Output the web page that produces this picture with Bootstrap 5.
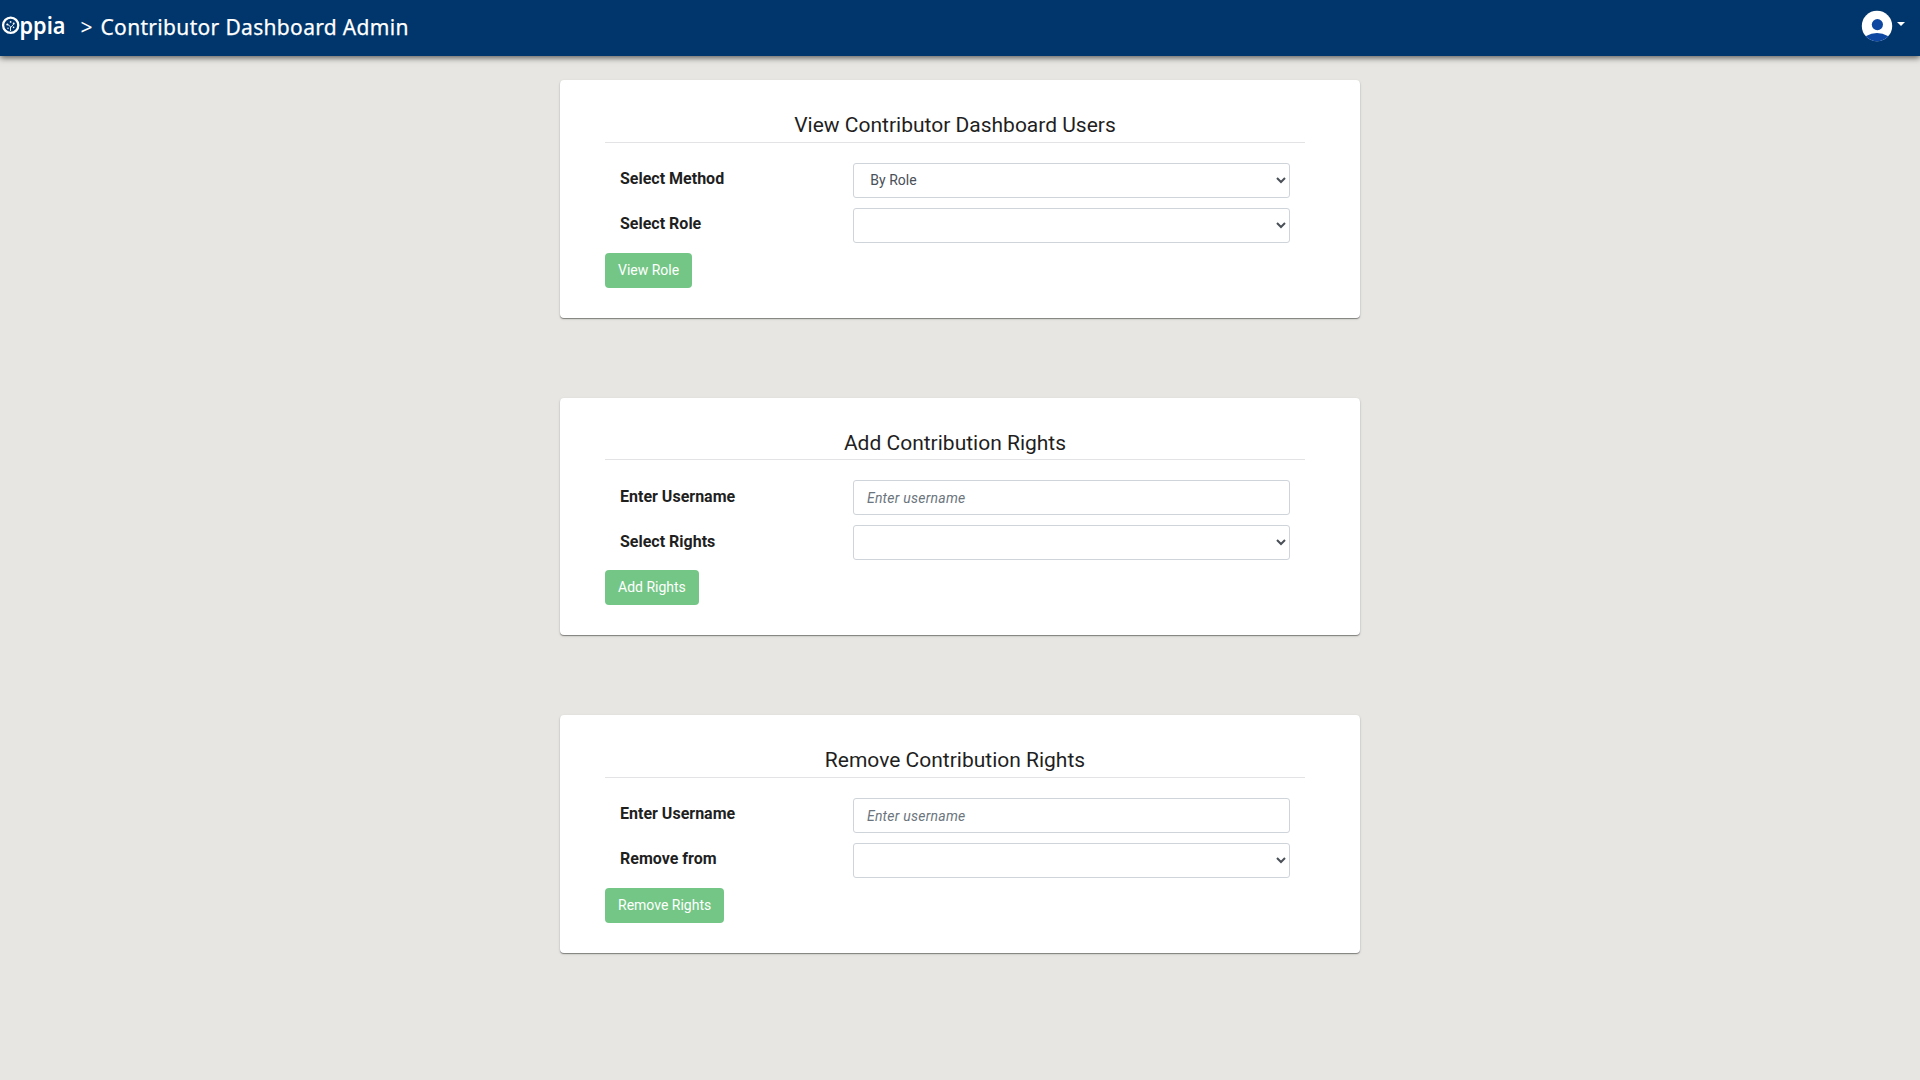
<!DOCTYPE html>
<html lang="en">
<head>
<meta charset="utf-8">
<title>Contributor Dashboard Admin</title>
<link rel="stylesheet" href="https://cdn.jsdelivr.net/npm/bootstrap@5.3.0/dist/css/bootstrap.min.css">
<style>
  body { background: #e7e6e2; color: #1f1f1f; font-family: Roboto, "Noto Sans", sans-serif; min-height: 100vh; }
  .top-bar { height: 56px; background: #00366b; box-shadow: 0 2px 6px rgba(0,0,0,.6); }
  .top-title { font: 400 21px/30px "Noto Sans", sans-serif; color: #fff; }
  .brand-mark { overflow: visible; }
  .crumb-sep { margin-left: 12.5px; width: 20px; }
  .crumb-name { letter-spacing: .33px; -webkit-text-stroke: .25px #fff; }
  .user-toggle { margin-right: 15px; }
  .panels { width: 800px; gap: 79.9px; padding-top: 24px; }
  .panel { height: 237.8px; padding: 30px 55px 0 45px; border: 0; border-radius: 4px; box-shadow: 0 1px 3px rgba(0,0,0,.12), 0 1px 1px rgba(0,0,0,.4); color: #1f1f1f; }
  .panel-heading { font-size: 21px; font-weight: 400; line-height: 31.5px; height: 32.7px; border-bottom: 1px solid #e3e3e5; margin-bottom: 20px; }
  .panel .row { --bs-gutter-x: 30px; margin: 0 0 10px; height: 35px; }
  .panel label { font-weight: 700; font-size: 16px; line-height: 24px; padding-top: 4.2px; }
  .panel .form-control { height: 35px; font-size: 14px; line-height: 21px; padding: 6px 12px; color: #495057; border: 1px solid #ced4da; border-radius: 3px; }
  .panel select.form-control { appearance: auto; }
  .panel .form-control::placeholder { color: #6c757d; font-style: italic; letter-spacing: .24px; }
  .panel input.form-control { padding-left: 12.6px; }
  .btn-go { height: 35px; padding: 6px 13px; font-size: 14px; line-height: 21px; border: 0; border-radius: 4px; }
  .btn-go:disabled { background: #74c686; color: #fff; opacity: 1; }
</style>
</head>
<body>
<nav class="top-bar d-flex justify-content-between position-relative">
  <div class="d-flex">
    <svg class="brand-mark" width="68" height="56" role="img" aria-label="Oppia">
      <circle cx="10.7" cy="25.3" r="7.6" fill="none" stroke="#fff" stroke-width="2.3"/>
      <path d="M10.5 31v-4.3L7.9 24.6M10.7 27.6l2.9-3.4" fill="none" stroke="#fff" stroke-width=".9"/>
      <g fill="#fff"><circle cx="7.3" cy="24.4" r="1"/><circle cx="10.6" cy="21.9" r=".9"/><circle cx="13.7" cy="23.4" r="1"/><circle cx="13.6" cy="27.4" r=".8"/><circle cx="8" cy="28.2" r=".7"/></g>
      <text x="19.5" y="33.7" fill="#fff" font-family="Noto Sans, sans-serif" font-weight="600" font-size="24" textLength="46" lengthAdjust="spacingAndGlyphs">ppia</text>
    </svg>
    <div class="top-title d-flex pt-1 mt-2"><span class="crumb-sep">&gt;</span><span class="crumb-name">Contributor Dashboard Admin</span></div>
  </div>
  <a href="#" class="user-toggle d-block" aria-label="Account">
    <svg class="d-block" width="45" height="56" viewBox="1860 0 45 56">
      <defs><clipPath id="avatar"><circle cx="1877" cy="26" r="15.2"/></clipPath></defs>
      <circle cx="1877" cy="26" r="15.2" fill="#fff"/>
      <circle cx="1877.4" cy="24.6" r="5.6" fill="#0d47a1"/>
      <ellipse cx="1877" cy="42.5" rx="14.5" ry="9.5" fill="#0d47a1" clip-path="url(#avatar)"/>
      <path d="M1897 22h8l-4 4z" fill="#fff"/>
    </svg>
  </a>
</nav>
<main class="panels d-flex flex-column mx-auto">
  <section class="card panel">
    <h2 class="panel-heading text-center">View Contributor Dashboard Users</h2>
    <div class="row"><label class="col-4" for="method">Select Method</label><div class="col-8"><select id="method" class="form-control"><option>By Role</option></select></div></div>
    <div class="row"><label class="col-4" for="role">Select Role</label><div class="col-8"><select id="role" class="form-control"><option></option></select></div></div>
    <button class="btn btn-success btn-go align-self-start" disabled>View Role</button>
  </section>
  <section class="card panel">
    <h2 class="panel-heading text-center">Add Contribution Rights</h2>
    <div class="row"><label class="col-4" for="add-user">Enter Username</label><div class="col-8"><input id="add-user" class="form-control" placeholder="Enter username"></div></div>
    <div class="row"><label class="col-4" for="rights">Select Rights</label><div class="col-8"><select id="rights" class="form-control"><option></option></select></div></div>
    <button class="btn btn-success btn-go align-self-start" disabled>Add Rights</button>
  </section>
  <section class="card panel">
    <h2 class="panel-heading text-center">Remove Contribution Rights</h2>
    <div class="row"><label class="col-4" for="remove-user">Enter Username</label><div class="col-8"><input id="remove-user" class="form-control" placeholder="Enter username"></div></div>
    <div class="row"><label class="col-4" for="remove-from">Remove from</label><div class="col-8"><select id="remove-from" class="form-control"><option></option></select></div></div>
    <button class="btn btn-success btn-go align-self-start" disabled>Remove Rights</button>
  </section>
</main>
<script src="https://cdn.jsdelivr.net/npm/bootstrap@5.3.0/dist/js/bootstrap.bundle.min.js"></script>
</body>
</html>
